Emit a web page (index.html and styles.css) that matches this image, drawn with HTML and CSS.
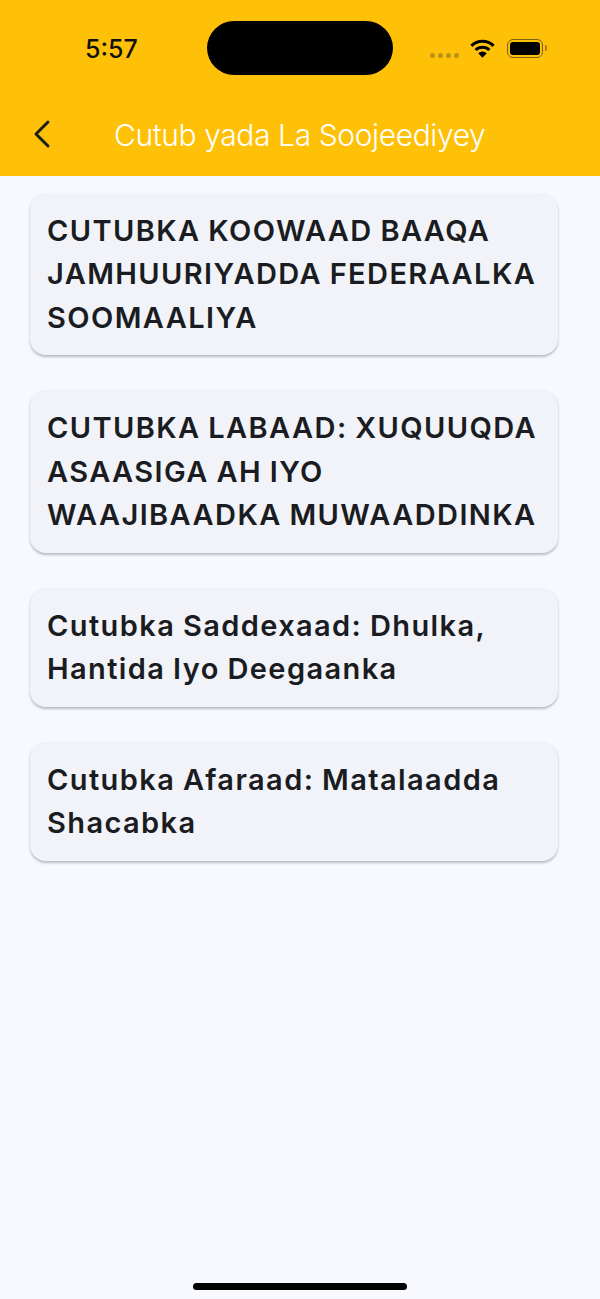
FILE: index.html
```html
<!DOCTYPE html>
<html lang="so">
<head>
    <meta charset="UTF-8">
    <meta name="viewport" content="width=device-width, initial-scale=1.0">
    <title>Cutub yada La Soojeediyey</title>
    <link rel="stylesheet" href="styles.css">
</head>
<body>
    <header class="header">
        <div class="status">
            <span class="time">5:57</span>
            <div class="island"></div>
            <div class="status-icons">
                <div class="dots"><i></i><i></i><i></i><i></i></div>
                <svg class="wifi" width="25" height="19" viewBox="0 0 25 19">
                    <path d="M1.4 6.8 A16 16 0 0 1 23.6 6.8" fill="none" stroke="#000" stroke-width="3"/>
                    <path d="M5.6 11 A10 10 0 0 1 19.4 11" fill="none" stroke="#000" stroke-width="3"/>
                    <path d="M8.2 14.2 A6.2 6.2 0 0 1 16.8 14.2 L12.5 18.8 Z" fill="#000"/>
                </svg>
                <div class="battery"><div class="battery-fill"></div></div>
            </div>
        </div>
        <div class="nav">
            <svg class="back" width="20" height="30" viewBox="0 0 20 30">
                <path d="M17 3 L5 15 L17 27" fill="none" stroke="#1f1f1f" stroke-width="3" stroke-linecap="round" stroke-linejoin="round"/>
            </svg>
            <h1>Cutub yada La Soojeediyey</h1>
        </div>
    </header>
    <main class="list">
        <div class="card">CUTUBKA KOOWAAD BAAQA JAMHUURIYADDA FEDERAALKA SOOMAALIYA</div>
        <div class="card">CUTUBKA LABAAD: XUQUUQDA ASAASIGA AH IYO WAAJIBAADKA MUWAADDINKA</div>
        <div class="card">Cutubka Saddexaad: Dhulka, Hantida Iyo Deegaanka</div>
        <div class="card">Cutubka Afaraad: Matalaadda Shacabka</div>
    </main>
    <div class="home-bar"></div>
</body>
</html>
```

FILE: styles.css
```css
* {
    box-sizing: border-box;
}

body {
    margin: 0;
    height: 1299px;
    display: flex;
    flex-direction: column;
    font-family: Inter, "Liberation Sans", sans-serif;
    background-color: #f8f9ff;
}

.header {
    height: 176px;
    flex-shrink: 0;
    background-color: #ffc107;
}

.status {
    height: 96px;
    padding: 21px 0 0 85px;
    display: flex;
    align-items: flex-start;
}

.time {
    width: 122px;
    margin-top: 14px;
    font-size: 25px;
    line-height: 28px;
    font-weight: 500;
    color: #111;
}

.island {
    width: 186px;
    height: 54px;
    border-radius: 27px;
    background-color: #000;
}

.status-icons {
    margin: 18px 0 0 37px;
    display: flex;
    align-items: center;
}

.dots {
    display: flex;
    gap: 3px;
    margin-top: 13px;
}

.dots i {
    width: 5px;
    height: 5px;
    border-radius: 50%;
    background-color: #b8941a;
}

.wifi {
    margin-left: 11px;
    margin-top: -1px;
}

.battery {
    width: 36px;
    height: 19px;
    margin-left: 12px;
    padding: 2px;
    border: 1.5px solid #7a5f10;
    border-radius: 6px;
    position: relative;
}

.battery::after {
    content: "";
    position: absolute;
    right: -5px;
    top: 5px;
    width: 2px;
    height: 6px;
    border-radius: 0 2px 2px 0;
    background-color: #a5760f;
}

.battery-fill {
    height: 100%;
    border-radius: 3px;
    background-color: #000;
}

.nav {
    height: 80px;
    padding: 0 0 0 31px;
    display: flex;
    align-items: center;
}

.back {
    margin-top: -4px;
}

.nav h1 {
    margin: -2px 0 0 63px;
    font-size: 30px;
    line-height: 36px;
    font-weight: 300;
    letter-spacing: -0.4px;
    color: #fff;
}

.list {
    flex: 1;
    padding: 18px 42px 0 30px;
    display: flex;
    flex-direction: column;
    gap: 36px;
}

.card {
    padding: 15px 17px 16.2px;
    font-size: 29px;
    line-height: 43.4px;
    font-weight: 600;
    letter-spacing: 1.4px;
    word-spacing: -1px;
    color: #1a1c22;
    background-color: #f1f3f9;
    border-radius: 16px;
    box-shadow: 0 1.5px 2.5px rgba(0, 0, 0, 0.25);
}

.home-bar {
    width: 214px;
    height: 7px;
    margin: 0 auto 9px;
    flex-shrink: 0;
    border-radius: 4px;
    background-color: #000;
}
```
